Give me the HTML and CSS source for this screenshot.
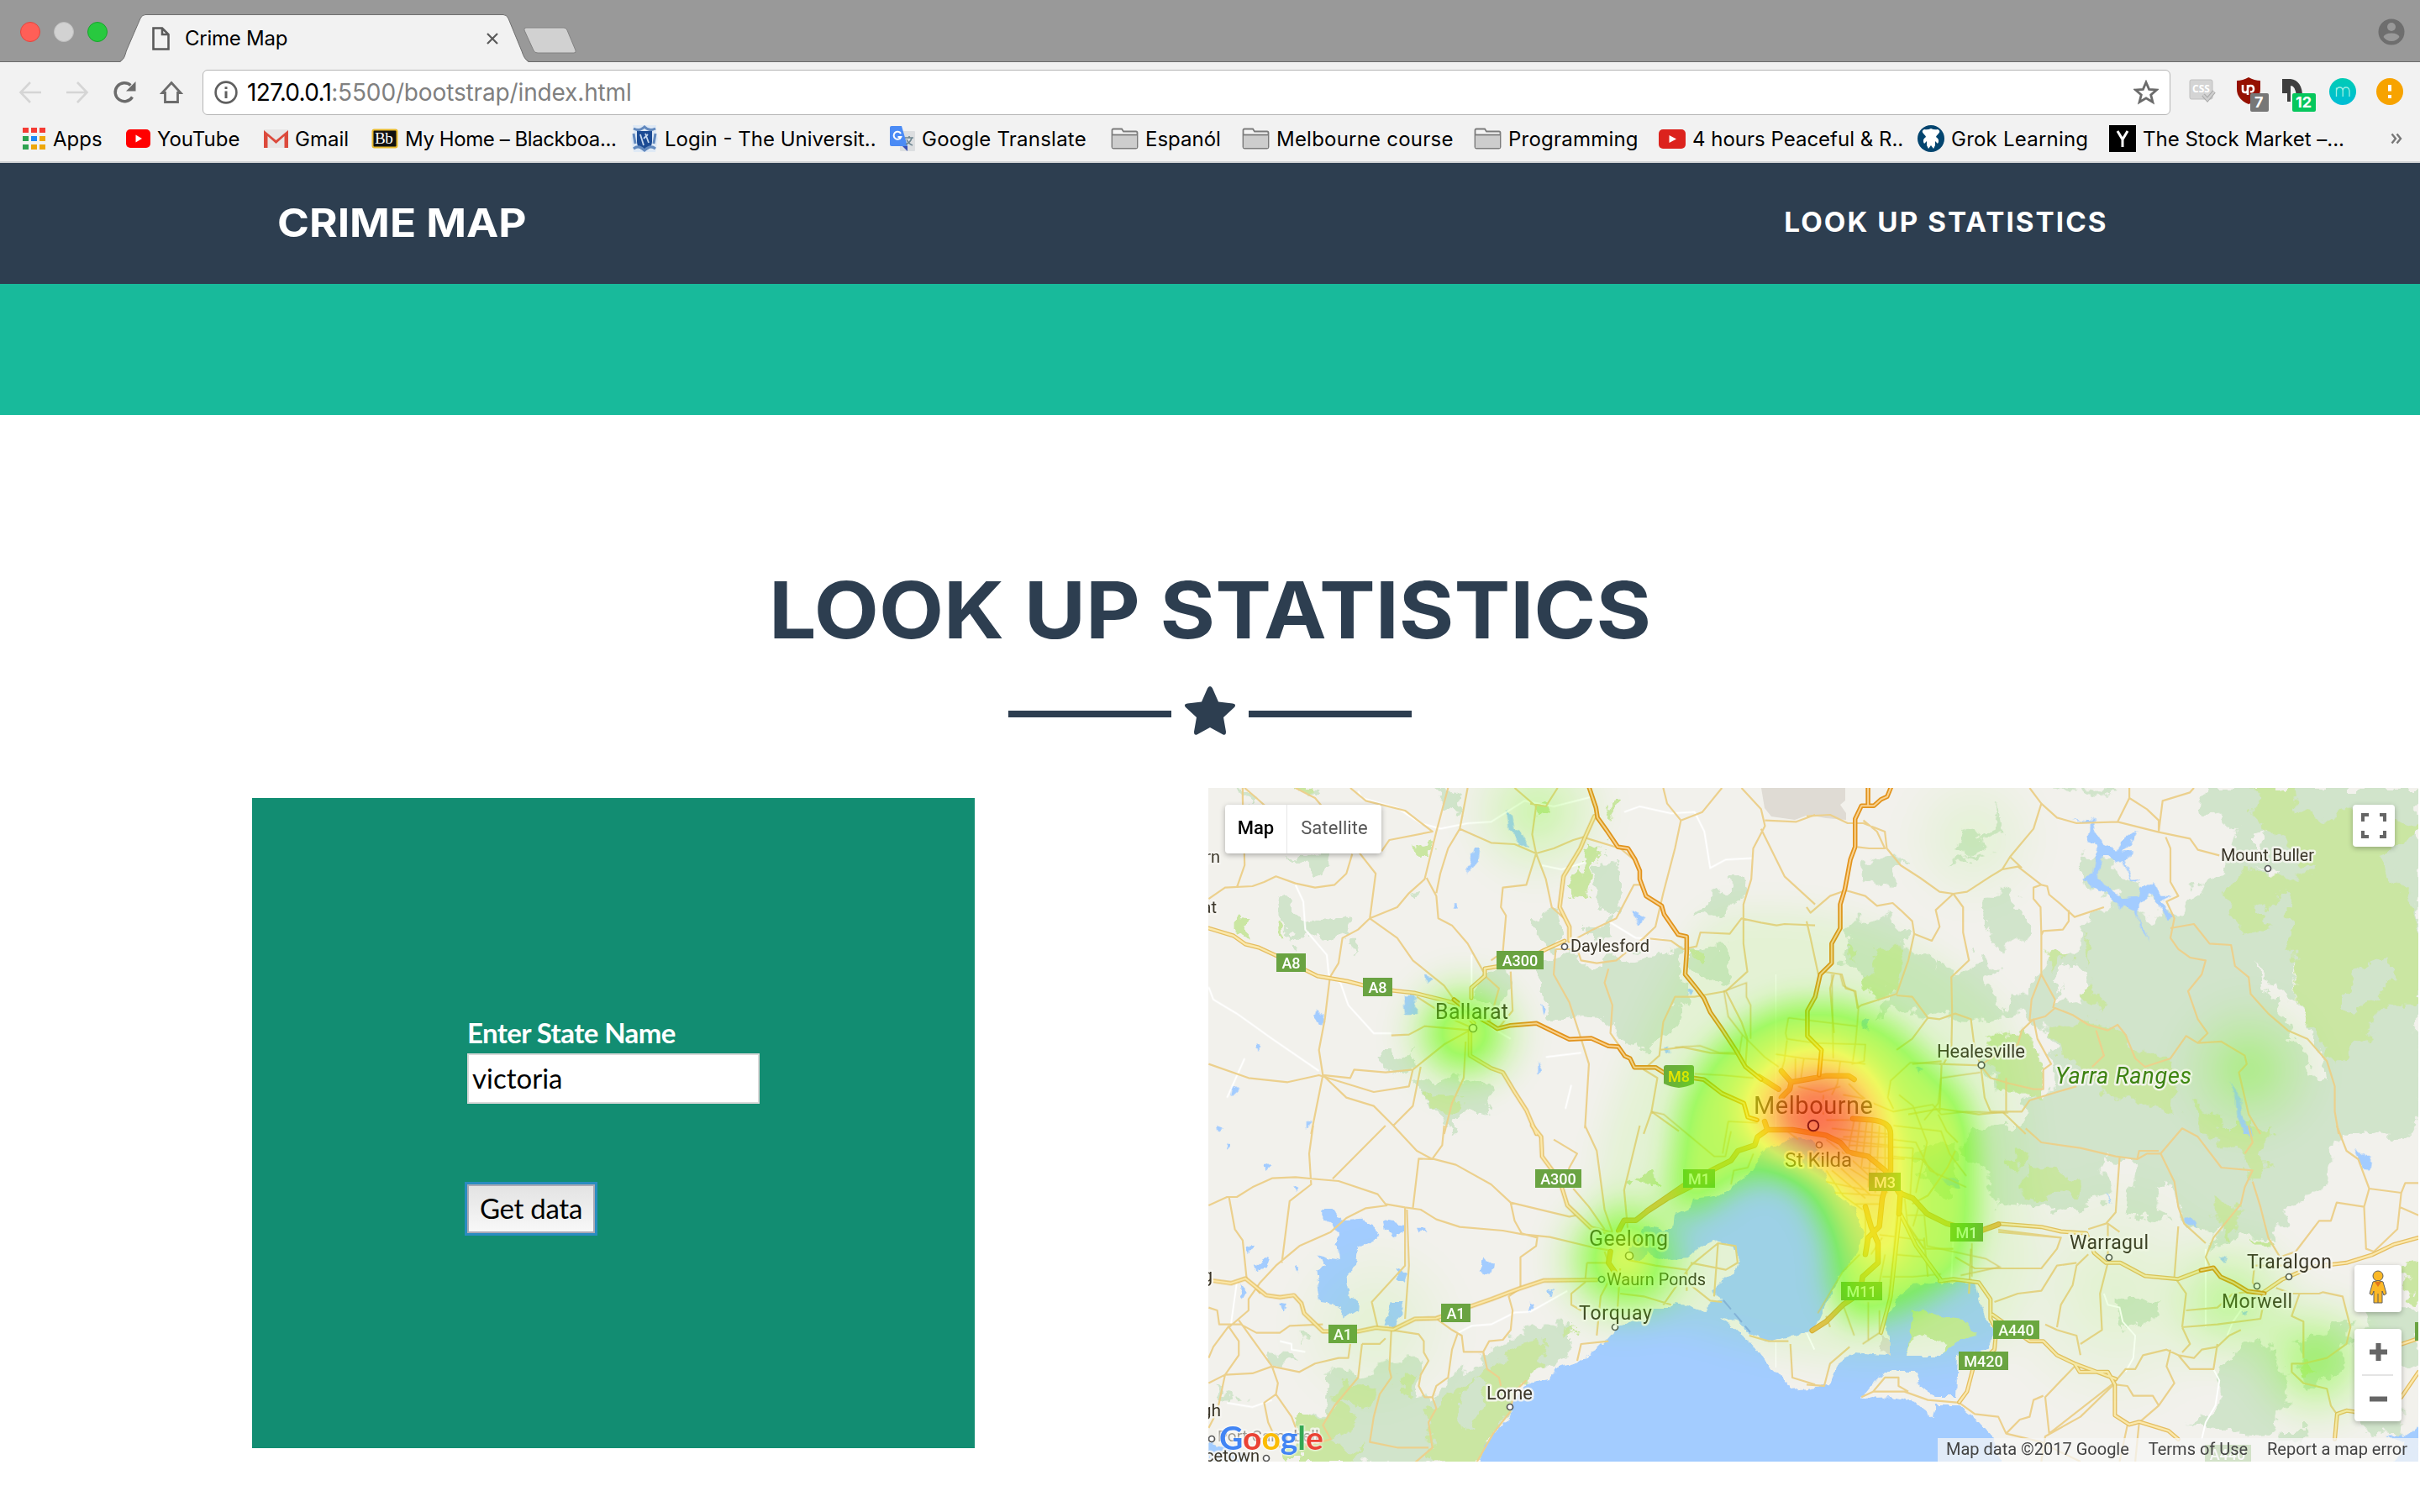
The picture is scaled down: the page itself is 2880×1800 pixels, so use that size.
FILE: index.html
```html
<!DOCTYPE html>
<html lang="en">
<head>
<meta charset="utf-8">
<title>Crime Map</title>
<link rel="stylesheet" href="styles.css">
</head>
<body>
<header class="browser">
  <div class="tabstrip">
    <div class="lights"><i class="light light-red"></i><i class="light light-gray"></i><i class="light light-green"></i></div>
    <div class="tab">
      <svg class="tab-shape" viewBox="0 0 486 57"><path d="M0 57C6 52 5 50 8 42L24 5Q26 0.5 30 0.5H456Q460 .5 462 5L478 44Q481 54 486 57Z" fill="#f2f2f2"/><path d="M0 56C6 52 5 50 8 42L24 5Q26 .5 30 .5H456Q460 .5 462 5L478 44Q481 54 486 56" fill="none" stroke="#6f6f6f"/></svg>
      <svg class="tab-file" viewBox="0 0 21 28"><path d="M1.5 1.5H12L19.500 9V26.500H1.500ZM12 1.500V9H19.500" fill="none" stroke="#5a5a5a" stroke-width="2.600"/></svg>
      <span class="tab-title">Crime Map</span>
      <svg class="tab-close" viewBox="0 0 14 14"><path d="M1 1L13 13M13 1L1 13" stroke="#5a5a5a" stroke-width="2.200"/></svg>
    </div>
    <svg class="newtab" viewBox="0 0 66 34"><path d="M4 1H49Q52 1 53 4L63 28Q64 31 61 31H18Q14 31 13 28L2 4Q1 1 4 1Z" fill="#d1d1d1" stroke="#828282"/></svg>
    <svg class="person" viewBox="0 0 32 32"><circle cx="16" cy="16" r="15.500" fill="#6e6e6e"/><circle cx="16" cy="10" r="5" fill="#999"/><path d="M6.500 22Q8 17.500 16 17.500T25.500 22Q22 27 16 27T6.500 22Z" fill="#999"/></svg>
  </div>
  <div class="toolbar">
    <div class="navbtns">
      <svg viewBox="0 0 28 28"><path d="M14 2L2.500 14L14 26M3 14H27" fill="none" stroke="#d5d5d5" stroke-width="2.600"/></svg>
      <svg viewBox="0 0 28 28"><path d="M14 2L25.500 14L14 26M25 14H1" fill="none" stroke="#d5d5d5" stroke-width="2.600"/></svg>
      <svg viewBox="0 0 28 28"><path d="M23.500 19.500A11 11 0 1 1 21.500 5.500" fill="none" stroke="#6b6b6b" stroke-width="3.400"/><path d="M27.500 1V12.500H16Z" fill="#6b6b6b"/></svg>
      <svg viewBox="0 0 28 28"><path d="M14 2.500L25 14.500H21.500V25.500H6.500V14.500H3Z" fill="none" stroke="#6b6b6b" stroke-width="2.800"/></svg>
    </div>
    <div class="omnibox">
      <svg class="info" viewBox="0 0 28 28"><circle cx="14" cy="14" r="12.400" fill="none" stroke="#5f5f5f" stroke-width="2.600"/><path d="M14 12.500V21M14 7.200V10" stroke="#5f5f5f" stroke-width="3"/></svg>
      <span class="url"><b>127.0.0.1</b>:5500/bootstrap/index.html</span>
      <svg class="star" viewBox="0 0 30 30"><path d="M15 3L18.600 11.300L27.500 12L20.700 17.900L22.900 26.500L15 21.800L7.100 26.500L9.300 17.900L2.500 12L11.400 11.300Z" fill="none" stroke="#6b6b6b" stroke-width="2.800"/></svg>
    </div>
    <div class="exts">
      <svg viewBox="0 0 42 42"><rect x="2" y="6" width="27" height="23" rx="2" fill="#d4d4d4" stroke="#c0c0c0"/><text x="5" y="21" class="css-word">CSS</text><path d="M18 24L23 29.500L31 20" fill="none" stroke="#a9a9a9" stroke-width="4.500"/><path d="M18 24L23 29.500L31 20" fill="none" stroke="#cfcfcf" stroke-width="2.500"/></svg>
      <svg viewBox="0 0 42 42"><path d="M2 7Q9 7 16 3Q23 7 30 7V17Q30 29 16 35Q2 29 2 17Z" fill="#951000"/><path d="M9 12V18Q9 21 12 21T15 18V12M15 24V16Q15 13 18.500 13T22 17T18 20" fill="none" stroke="#fff" stroke-width="2.600"/><rect x="18" y="22" width="22" height="22" rx="2" fill="#777"/><text x="23" y="39" class="badge-num">7</text></svg>
      <svg viewBox="0 0 42 42"><path d="M0 5H10Q24 7 24 26H17Q16 13 10 13V32H6V22H0Z" fill="#3f3f3f"/><rect x="12" y="22" width="28" height="22" rx="2" fill="#06c75d"/><text x="16" y="39" class="badge-num">12</text></svg>
      <svg viewBox="0 0 42 42"><defs><linearGradient id="mg" x2="0" y2="1"><stop stop-color="#00ccb4"/><stop offset="1" stop-color="#00bcd6"/></linearGradient></defs><circle cx="16" cy="20" r="16" fill="url(#mg)"/><path d="M8.500 26V15.500M8.500 19Q9 15 12.500 15T16.200 19V26M16.200 19Q16.500 15 20 15T24 19V26" fill="none" stroke="#9defe4" stroke-width="1.300"/></svg>
      <svg viewBox="0 0 42 42"><circle cx="16" cy="20" r="16" fill="#f7a300"/><path d="M16 12V19.500M16 24V28" stroke="#fff" stroke-width="4"/></svg>
    </div>
  </div>
  <nav class="bookmarks">
    <a class="bm"><svg viewBox="0 0 28 26" width="28" height="26"><path d="M0 0H7V6H0ZM10 0H17V6H10ZM20 0H27V6H20Z" fill="#f53b34"/><path d="M0 10H7V16H0ZM0 20H7V26H0Z" fill="#2da250"/><path d="M10 10H17V16H10Z" fill="#1e88f5"/><path d="M20 10H27V16H20ZM10 20H17V26H10ZM20 20H27V26H20Z" fill="#eea70b"/></svg>Apps</a>
    <a class="bm"><svg viewBox="0 0 29 22" width="29" height="22"><rect width="29" height="22" rx="5" fill="#f00"/><path d="M11.500 6.500L19 11L11.500 15.500Z" fill="#fff"/></svg>YouTube</a>
    <a class="bm"><svg viewBox="0 0 29 22" width="29" height="22"><path d="M0 0H29V22H0Z" fill="#e8e6e6"/><path d="M0 22V1L14.500 13L29 1V22H24.500V8L14.500 17L4.500 8V22Z" fill="#dc4a3c"/></svg>Gmail</a>
    <a class="bm bm-tight"><svg viewBox="0 0 32 24" width="32" height="24"><rect x="1.500" y="1.500" width="29" height="21" rx="2" fill="#111" stroke="#e8b92b" stroke-width="2"/><text x="4" y="18" class="bb">Bb</text></svg>My Home – Blackboa...</a>
    <a class="bm"><svg viewBox="0 0 32 32" width="32" height="32"><path d="M2 0H30V9L32 16L29 32H3L0 16L3 9Z" fill="#dfe9f5"/><path d="M7 7H25V20Q25 27 16 31Q7 27 7 20Z" fill="#1c4b94"/><path d="M3 4Q10 8 16 2Q22 8 29 4M3 28Q9 23 16 30Q23 23 29 28M3 10L5 22M29 10L27 22" fill="none" stroke="#6289be" stroke-width="3"/><path d="M11 11L15 24M17 10L21 21M20 11L15 16" stroke="#c6d8ee" stroke-width="1.800"/></svg>Login - The Universit..</a>
    <a class="bm bm-wide"><svg viewBox="0 0 30 30" width="30" height="30"><rect x="12" y="6" width="18" height="24" rx="1" fill="#dcdee0"/><path d="M15 24L21 30V24Z" fill="#3a50b5"/><path d="M2 0H14L21 24H2Q0 24 0 22V2Q0 0 2 0Z" fill="#4b8bf5"/><path d="M13 9A4.500 4.500 0 1 0 13.300 13H9.500" fill="none" stroke="#fff" stroke-width="2"/><path d="M18 14H28M23 12V14M26 14Q25 19 19 22M20 16Q22 21 27 23" stroke="#6d8590" stroke-width="1.600" fill="none"/></svg>Google Translate</a>
    <a class="bm"><svg viewBox="0 0 33 26" width="33" height="26"><path d="M1.500 5V23Q1.500 24.500 3 24.500H30Q31.500 24.500 31.500 23V6Q31.500 4.500 30 4.500H15L13 1.500H3Q1.500 1.500 1.500 3Z" fill="#f5f5f5" stroke="#7b7b7b" stroke-width="1.800"/><path d="M2 8H31V24H2Z" fill="#cdcdcd"/><path d="M2 8.500H31" stroke="#7b7b7b" stroke-width="1.800"/></svg>Espanól</a>
    <a class="bm bm-wide"><svg viewBox="0 0 33 26" width="33" height="26"><path d="M1.500 5V23Q1.500 24.500 3 24.500H30Q31.500 24.500 31.500 23V6Q31.500 4.500 30 4.500H15L13 1.500H3Q1.500 1.500 1.500 3Z" fill="#f5f5f5" stroke="#7b7b7b" stroke-width="1.800"/><path d="M2 8H31V24H2Z" fill="#cdcdcd"/><path d="M2 8.500H31" stroke="#7b7b7b" stroke-width="1.800"/></svg>Melbourne course</a>
    <a class="bm bm-wide"><svg viewBox="0 0 33 26" width="33" height="26"><path d="M1.500 5V23Q1.500 24.500 3 24.500H30Q31.500 24.500 31.500 23V6Q31.500 4.500 30 4.500H15L13 1.500H3Q1.500 1.500 1.500 3Z" fill="#f5f5f5" stroke="#7b7b7b" stroke-width="1.800"/><path d="M2 8H31V24H2Z" fill="#cdcdcd"/><path d="M2 8.500H31" stroke="#7b7b7b" stroke-width="1.800"/></svg>Programming</a>
    <a class="bm"><svg viewBox="0 0 32 23" width="32" height="23"><rect width="32" height="23" rx="5" fill="#dc231d"/><path d="M12.500 7L21 11.500L12.500 16Z" fill="#fff"/></svg>4 hours Peaceful &amp; R..</a>
    <a class="bm bm-wide"><svg viewBox="0 0 32 32" width="32" height="32"><circle cx="16" cy="16" r="16" fill="#04456f"/><path d="M8 5Q12 6 16 4Q20 6 24 5Q28 7 25 10Q22 13 22 14Q27 17 24 22L21 19V24L19 28L16 24L13 28L11 24V19L8 22Q5 17 10 14Q10 13 7 10Q4 7 8 5Z" fill="#fff"/></svg>Grok Learning</a>
    <a class="bm"><svg viewBox="0 0 32 32" width="32" height="32"><rect width="32" height="32"/><path d="M10 7L16 17L22 7M16 17V26" fill="none" stroke="#fff" stroke-width="3"/></svg>The Stock Market –...</a>
    <a class="bm"><svg viewBox="0 0 14 14" width="14" height="14"><path d="M1.500 1.500L6 7L1.500 12.500M7.500 1.500L12 7L7.500 12.500" fill="none" stroke="#777" stroke-width="2.400"/></svg></a>
  </nav>
</header>

<nav class="site-nav">
  <a class="brand">CRIME MAP</a>
  <a class="nav-link">LOOK UP STATISTICS</a>
</nav>
<div class="hero"></div>

<section class="stats">
  <h2 class="heading">LOOK UP STATISTICS</h2>
  <div class="divider">
    <span class="rule"></span>
    <svg viewBox="0 0 62 58"><path d="M31 0Q33 0 34 2.500L41 18.500L58 20.500Q63 21.500 60 25L47 37L50 54Q50 59 46.500 57.500L31 49L15.500 57.500Q12 59 12 54L15 37L2 25Q-1 21.500 4 20.500L21 18.500L28 2.500Q29 0 31 0Z" fill="#2d3e50"/></svg>
    <span class="rule"></span>
  </div>
  <div class="row">
    <form class="panel">
      <label class="label" for="state">Enter State Name</label>
      <input class="field" id="state" type="text" value="victoria">
      <button class="submit" type="button">Get data</button>
    </form>
    <div class="map">
      <svg class="map-canvas" viewBox="0 0 1440 802">
        <defs>
          <filter id="rough" x="0" y="0" width="1440" height="802" filterUnits="userSpaceOnUse">
            <feTurbulence type="fractalNoise" baseFrequency=".045" numOctaves="4" seed="4" result="n"/>
            <feDisplacementMap in="SourceGraphic" in2="n" scale="34" xChannelSelector="R" yChannelSelector="G"/>
          </filter>
          <filter id="shore" x="0" y="0" width="1440" height="802" filterUnits="userSpaceOnUse">
            <feTurbulence type="fractalNoise" baseFrequency=".08" numOctaves="3" seed="9" result="n"/>
            <feDisplacementMap in="SourceGraphic" in2="n" scale="9" xChannelSelector="R" yChannelSelector="G"/>
          </filter>
          <filter id="heat" x="-60" y="-60" width="1560" height="920" filterUnits="userSpaceOnUse" color-interpolation-filters="sRGB">
            <feGaussianBlur stdDeviation="19"/>
            <feColorMatrix values="0 0 0 1 0  0 0 0 1 0  0 0 0 1 0  0 0 0 1 0"/>
            <feComponentTransfer>
              <feFuncR type="table" tableValues=".4 .4 .4 .4 .66 .92 1 1 1 1 1"/>
              <feFuncG type="table" tableValues="1 1 1 1 1 1 .84 .62 .38 .2 .12"/>
              <feFuncB type="table" tableValues="0 0 0 0 0 0 0 0 0 0 0"/>
              <feFuncA type="table" tableValues="0 .17 .38 .58 .6 .6 .6 .6 .63 .66 .66"/>
            </feComponentTransfer>
          </filter>
          <radialGradient id="spot"><stop stop-color="#000" stop-opacity="1"/><stop offset=".5" stop-color="#000" stop-opacity=".45"/><stop offset="1" stop-color="#000" stop-opacity="0"/></radialGradient>
          <clipPath id="frame"><path d="M0 0H1440V802H0Z"/></clipPath>
          <g id="motorways">
            <g transform="translate(-8 -8) scale(.4656 .3333)">
              <path d="M990 20L1008 95L1012 130L1035 175L1064 235L1090 240L1108 280L1120 320V350L1136 410L1176 445L1182 475L1218 548L1240 555V610L1236 690L1265 740L1284 775L1300 825L1330 885L1365 960L1390 1020L1430 1065"/>
              <path d="M645 780L690 830L735 865L756 884L790 872L856 865L900 895L940 922L996 918L1040 946L1065 948L1082 982L1095 990L1106 1022H1160L1186 1045L1284 1066L1330 1115L1386 1150L1396 1200L1420 1210"/>
            </g>
            <g transform="translate(712 -8) scale(.4656 .3333)">
              <path d="M157 20V85M215 24L206 55L190 65L172 88H140L124 135V235L112 280L98 385L86 440V525L64 580V650L35 690L22 770L2 820V910L38 960L32 1050"/>
            </g>
            <g transform="translate(712 402) scale(.4656 .3333)"><path d="M1008 517L1040 508L1058 540L1090 560L1128 592L1170 600"/></g>
          </g>
          <g id="aroads">
            <path d="M0 167L30 176L44 186L60 190L88 203L130 224L165 230L200 239L245 244L293 256L316 280M313 250V238L329 224V215L372 208L400 193L424 182"/>
            <g transform="translate(-8 -8) scale(.4656 .3333)">
              <path d="M940 570V520L915 450L925 340L968 240L980 200L1004 125"/>
              <path d="M686 890V980L740 1025L770 1040L800 1110L830 1175L856 1260"/>
            </g>
            <g transform="translate(-8 402) scale(.4656 .3333)">
              <path d="M845 0L868 40L870 110L915 195L935 285L995 365L1045 385M18 552L75 563L112 546L165 606L200 613L236 606L255 635L262 670L310 735L400 735L445 722L490 728L545 690L600 688L740 620L812 582L875 553L1010 551"/>
            </g>
            <g transform="translate(712 402) scale(.4656 .3333)">
              <path d="M490 350L600 362L650 378L715 385L735 455L765 490H802L865 537L950 548L1008 517M1165 598L1215 550L1290 505L1380 490L1445 462L1500 425L1564 400M340 555L375 548L440 560L470 620V690L485 730L480 800L425 870L410 950L390 988M475 675L520 720L570 770L605 770L640 820L685 850L698 880H770L788 925V1035L825 1068L850 1058L925 1090L950 1120M1350 1120L1356 1030L1380 1018L1400 1022M1564 880L1520 970M790 905L685 850"/>
              <path d="M240 315L280 430L345 555M238 315L215 610L190 740M1500 790L1564 760"/>
            </g>
          </g>
          <g id="urban">
            <g transform="translate(522 222) scale(.3333)">
              <path d="M480 345L515 385L600 370L640 362H720L740 375M400 365L470 410M515 385L510 410L480 440M735 515L800 520Q870 525 870 570V700L840 800L830 900L790 940L780 1000M780 830L800 900L825 960V1030L770 1080L760 1140L700 1180L640 1240L590 1272M420 525L430 555H520L640 575L690 600L720 635L790 650L850 700L900 780L950 800L1000 855L1070 890L1180 920L1255 893M430 555L395 580L385 610L325 630L300 665L240 695L130 755L0 845"/>
              <path d="M905 780L900 855"/>
            </g>
            <g transform="translate(-8 402) scale(.4656 .3333)"><path d="M1250 218L1190 260L1140 305L1110 338H1080L1066 375M1045 450L1040 490L1055 520"/></g>
          </g>
        </defs>
        <g clip-path="url(#frame)">
          <rect width="1440" height="802" fill="#f2f1ec"/>
          <g filter="url(#rough)" class="forest">
            <g transform="translate(-8 -8) scale(.4656 .3333)">
              <path d="M190 400L235 430L250 490L300 510L370 480L385 530L310 560L275 540L240 590L215 540L190 500ZM600 40L660 30L655 110L620 90ZM230 265L340 260L330 320L290 330ZM80 40L130 50L120 90ZM240 35L300 40L290 70ZM1035 260L1070 290L1075 420L1040 500L1010 440L1000 340ZM850 490L900 470L930 540L890 600L850 560ZM990 520L1050 500L1060 560L990 590ZM860 650L930 610L1000 660L1080 630L1220 610L1235 720L1215 870L1140 960L1060 910L1030 850L950 840L900 840L850 740ZM1300 420L1360 350L1400 380L1370 460L1270 470ZM1250 600L1340 590L1350 700L1310 720L1250 660ZM720 680L780 660L790 740L760 810L710 780ZM450 990L540 950L545 1020L490 1060ZM550 1070L640 1060L740 1080L740 1150L640 1240L580 1170ZM365 560L390 560L385 620ZM530 390L565 380L550 420Z"/>
            </g>
            <g transform="translate(712 -8) scale(.4656 .3333)">
              <path d="M130 280L250 270L220 390L150 370ZM490 60L510 190L430 240L420 300L350 290L470 260L380 240L400 170L460 210L490 150ZM470 380L540 440L570 560L500 590L460 560ZM120 500L190 490L240 520L250 580L340 680L330 640L380 700L440 620L480 680L450 750L560 760L610 650L690 590L710 510L790 430L840 460L880 480L940 480L1000 380L1060 300L1100 180L1010 100L1020 20H1568V1260H540L560 1140L640 1080L620 900L560 840L430 850L350 840L220 820L180 840L220 760L150 700L90 650L110 560ZM700 270L760 250L820 340L900 420L830 430L740 400L700 360ZM620 20L800 30L780 60ZM450 960L560 920L600 1000L600 1120L490 1100L460 1040Z"/>
            </g>
            <g transform="translate(-8 402) scale(.4656 .3333)">
              <path d="M180 800L230 810L240 850L190 860ZM250 740L290 760L250 780ZM330 870L400 880L480 850L560 820L570 870L540 960L580 980L620 920L720 850L780 740L860 710L960 720L960 780L900 850L830 900L800 1000L740 1100L700 1210H400L260 1160L250 1060L320 1000ZM30 930L60 940L70 990ZM80 960L110 980L90 1000Z"/>
            </g>
            <g transform="translate(712 402) scale(.4656 .3333)">
              <path d="M410 20L520 0H1360L1330 200L1230 300L1190 410L1120 400L1040 430L1050 380L960 360L940 200L880 220L920 340L820 320L840 130L760 110L780 240L660 310L480 280L460 170L400 120ZM790 620L900 610L880 700L800 720ZM1060 830L1170 760L1220 860L1240 1000L1170 1110L1070 1100L980 1060L1060 1000ZM1250 780L1390 700L1370 860L1290 950L1240 880ZM1420 640H1568V860L1430 860ZM1400 1020H1520V1100L1420 1090ZM1210 1080H1280V1120H1200ZM280 80L380 60L400 240L350 250L280 170Z"/>
            </g>
          </g>
          <g filter="url(#rough)" class="clearing">
            <path d="M1248 205L1262 245L1290 290L1310 335L1330 350L1328 320L1310 285L1300 230L1290 215L1300 262L1275 250ZM1245 55L1262 48L1255 70L1245 75ZM1040 330L1055 300L1058 320L1050 345ZM1020 210L1050 220L1035 260L1010 250ZM935 215L945 270L960 250L955 230ZM1245 94L1275 102L1272 112ZM870 300L880 290L885 325L870 315Z"/>
          </g>
          <g filter="url(#rough)" class="park">
            <g transform="translate(-8 -8) scale(.4656 .3333)"><path d="M840 70L880 70L900 140L850 130ZM980 220L1030 240L1000 310L985 420L930 380L970 330ZM85 485L125 490L130 560L85 550ZM180 490L215 570L185 550ZM540 230L590 210L580 270ZM1040 70L1060 80L1050 140ZM570 1130L660 1120L660 1190L590 1180ZM1240 600L1290 620L1280 660ZM230 15H270V45L240 40Z"/></g>
            <g transform="translate(712 -8) scale(.4656 .3333)"><path d="M1140 20H1240L1250 90L1320 150L1380 100L1568 150V180L1470 290L1560 460L1568 800L1480 800L1430 900L1350 1020L1300 880L1270 850L1240 640L1230 520L1180 500L1110 540L1070 430L1120 320L1230 350L1290 330L1200 200L1150 120ZM185 580L250 590L240 700L210 780L150 750ZM95 600L130 590L120 630ZM615 600L670 610L630 690ZM700 740L740 720L750 840L720 820ZM620 900L700 850L790 870L860 980L930 1010L950 1110L930 1190L860 1150L790 1140L740 1080L660 1000ZM460 920L560 890L600 990L600 1120L500 1120ZM990 1140L1080 1250H1010ZM705 540L730 610L720 650Z"/></g>
            <g transform="translate(-8 402) scale(.4656 .3333)"><path d="M370 920L440 930L420 1000L360 990L400 1040L360 1100L330 1140L410 1160L380 1200H210L260 1100L240 1050L300 1030L340 980ZM500 880L540 900L530 980L500 960ZM760 840L850 750L885 800L880 860L840 900L790 1000L740 1100L690 1210H590L580 1020L640 960L700 900ZM930 720L970 740L940 750ZM1110 180L1160 150L1160 215L1110 200Z"/></g>
            <g transform="translate(712 402) scale(.4656 .3333)"><path d="M565 130L690 200L690 250L630 240L600 280L560 260ZM510 110L570 100L540 150ZM1020 0H1180L1180 200L1140 190L1100 90L1050 60ZM1040 240L1110 290L1080 410L1050 370ZM1250 830L1310 880L1250 900ZM1520 480L1568 490V620L1530 600ZM1130 410L1180 420L1170 450Z"/></g>
          </g>
          <g filter="url(#rough)" class="forest"><path d="M1370 215L1410 200L1400 240L1360 275L1350 260ZM1245 145L1290 130L1285 170L1265 160ZM1405 70L1440 65V120L1405 90ZM290 740L320 700L335 720L310 765Z"/></g>
          <path d="M658 0H758V15L752 20L759 30V38L735 36L714 32L698 38L670 34L662 24Z" fill="#dfdbd4"/>
          <g filter="url(#shore)" class="water">
            <path d="M318 810L339 769L362 744L360 735L381 709L406 704L416 690L434 685L462 669L476 655L490 639L523 632L527 620L551 620L558 612L592 622L597 612L613 609L599 599L616 582L625 579L631 562L625 545L602 539L588 545L572 559L541 562L523 552L519 560L509 565L499 545L513 535L518 519L537 525L553 525L555 509L572 502L576 489L611 485L630 469L648 455L662 432L682 422L702 415L722 419L732 455L745 482L769 499L779 532L772 555L752 582L735 612L722 642L702 652L672 659L649 652L629 635L609 630L644 659L662 682L681 699L693 717L714 715L740 710L747 689L768 672L805 675L812 669L805 635L819 609L838 592L870 589L912 589L917 612L935 649L926 669L891 675L889 725L866 725L847 712L842 695L805 695L789 712L777 727L814 725L842 732L863 750L866 735L894 735L917 755L935 775L945 810Z"/>
            <g transform="translate(-8 402) scale(.4656 .3333)"><path d="M310 300L340 300L360 340L410 335L440 360L452 400L400 435L395 500L370 530L375 610L402 620L400 660L365 690L350 640L305 630L295 520L320 500L295 460L350 480L345 430L355 380L310 340ZM485 630H510V680L490 720L465 710ZM465 340L520 350L515 380L490 400L470 370ZM720 470L745 490L740 530L710 520ZM135 500L175 470L165 510L140 520ZM110 430L130 425L120 460ZM235 215L248 225L240 240ZM165 130L180 140L165 160ZM500 510L522 530L515 560L500 550ZM550 365H572V380L555 382ZM198 635L215 640L205 660ZM885 590L900 580L895 610ZM835 630L848 640L838 670ZM100 560L115 590L105 615ZM65 60L75 70L68 90ZM18 1130L120 1180L110 1210H18ZM240 500L252 510L245 530Z"/></g>
            <g transform="translate(-8 -8) scale(.4656 .3333)"><path d="M780 105L795 120L800 170L820 190L838 235L810 220L785 170ZM695 240H710L705 290L680 330ZM515 765L548 770V835H520ZM295 815L315 840L305 870L290 840ZM570 695L592 700L575 720ZM80 1090L98 1100L75 1130ZM640 430H650V455H640ZM1100 460L1115 470L1130 490L1118 520ZM860 1000L872 1030L860 1050ZM140 940L155 945L145 960ZM870 800L882 815L875 830ZM1185 950H1196V975L1185 970ZM1240 740L1255 750L1245 765ZM270 1210L280 1220L270 1245ZM40 1230L60 1240L45 1255Z"/></g>
            <g transform="translate(712 -8) scale(.4656 .3333)"><path d="M680 138L725 142L735 120L740 180L760 225L790 245L805 215L845 180L825 230L805 250L838 250L825 275L815 290L835 350L850 345L835 360L810 290L770 270L755 270L745 340L770 380L805 415L845 410L850 390L885 360L905 410L935 410L905 430L920 460L940 480L925 490L895 440L880 395L850 440L848 490L875 570L855 530L840 460L810 440L800 465V440L765 400L730 380L705 350L730 330L735 290L742 230L715 220L725 170V150ZM145 850H160L158 890L145 885ZM275 1020L295 1030L290 1045ZM1080 1070L1105 1120L1115 1190L1135 1260H1115L1100 1190L1095 1120Z"/></g>
            <g transform="translate(712 402) scale(.4656 .3333)"><path d="M1120 0H1135L1140 45L1128 30ZM1400 80L1430 110L1445 110L1440 165L1420 150ZM965 330L985 320L1000 365L970 350ZM760 240L775 260L778 280ZM1055 465L1075 475L1070 485ZM345 190L385 190L395 220L360 215ZM1568 1070V1210H1500L1530 1130L1480 1110L1540 1105ZM1110 660L1128 662L1120 678Z"/></g>
          </g>
          <g filter="url(#shore)"><path d="M838 619L870 629L898 632L914 650L894 659L870 675L833 675Z" fill="#cae6a2"/><path d="M852 650L866 658L880 662L872 676L833 676L836 658Z" fill="#f2f1ec"/><path d="M800 650L812 660L812 676L800 670Z" fill="#dfdbd4"/></g>

          <g class="tracks">
            <g transform="translate(-8 -8) scale(.4656 .3333)"><path d="M240 370L260 430L265 530L320 620L325 690L355 720L375 800L440 900H485M18 735L30 780L90 830L180 920L300 1035M400 35L410 60L500 95L560 150L610 170L680 150L740 145L825 70L900 90L1000 55M1080 110L1120 90L1200 115L1260 110L1285 180L1300 310L1340 280L1410 275M690 620V740M870 300L920 315L980 290M1040 500L1110 560L1180 565M110 990L65 1130M880 985L970 970M945 1085L930 1170M740 880L790 920"/></g>
            <g transform="translate(-8 402) scale(.4656 .3333)"><path d="M935 590L840 665L800 668L740 710L690 715L655 740M90 560L75 710M200 770L230 780V800L265 808M65 990L130 1005L180 980"/></g>
            <g transform="translate(712 402) scale(.4656 .3333)"><path d="M760 600L770 640L800 650L808 700L840 750L835 830L815 880M1040 870L1055 910L1045 1000L1020 1060L1010 1120M1020 440V720M1120 640L1090 700L1075 750M0 740L20 800M375 400L370 550"/></g>
            <path class="seam" d="M675.500 222V410M675.500 660V690"/>
          </g>
          <g class="roads">
            <g transform="translate(-8 -8) scale(.4656 .3333)">
              <path d="M18 420L60 380L130 375L160 360L190 340L240 365L290 380L340 370L370 330L385 260M105 24V60L110 300L90 380M110 24L140 60L180 110M240 24L290 60L320 110M380 24L420 70L520 105L590 180L480 210L460 250M400 250L445 330L430 490L400 530L360 560L350 650L328 700L315 850L300 960L310 1050L280 1260M430 490L500 450L530 400L570 350L600 180L630 24M430 490L500 560L540 640L620 730L645 780M575 345L600 410L605 490L640 515L680 580L720 680M680 24L660 170L630 240L610 330L600 400M660 170L740 220L800 225L855 258L900 240L950 210L975 200L1070 240L1105 280M800 24L855 90L845 190L855 258L830 370L770 380L765 450L778 480L770 610L740 640M910 24L880 90L840 80M855 258L880 350L895 450L935 500M940 575L1000 530L1060 490L1105 370L1120 370M905 600L900 690L940 790L970 920L990 1010L980 1240M905 600L960 600L970 640L1010 650L1060 640L1130 560L1160 520L1180 400L1210 240L1225 140L1190 80L1180 24M1225 140L1280 110L1330 24M1380 24L1430 100L1440 160L1410 240L1405 350L1385 440V580L1395 680L1340 750L1260 770L1210 770L1180 860L1170 980L1130 1030L1165 1060L1150 1180L1130 1260M1130 560L1200 570L1230 600L1265 590L1275 540L1350 545L1380 490L1430 505L1470 515L1490 510L1568 515M1430 170L1490 340L1568 440M1440 140L1520 145L1568 120M1340 750L1380 860L1395 920L1390 1020M1170 960L1230 950L1300 970L1370 975M1150 1180L1220 1250M790 680L795 820L760 880M550 770L640 850L690 880M485 908L530 905L570 875L690 890M685 890L620 940L540 1030L530 1090L440 1110L300 1050L220 1075L120 1060L18 1010M310 1050L380 1060L390 1030L470 1040L540 1030M310 1050L370 1130L440 1160L490 1230L540 1160L560 1020M675 930L670 1060L640 1150L620 1260M735 865L760 740L720 690M690 830L600 800M1040 670L1030 720L1050 800L1045 900L1070 950"/>
            </g>
            <g transform="translate(712 -8) scale(.4656 .3333)">
              <path d="M0 125L60 120L105 150H145L200 180L205 240L240 300L290 345L340 395L375 402L410 395L470 340L500 315L540 305L600 370L615 375L620 405L650 440L685 485L760 450M145 140L180 180L200 240L160 240L130 235M570 24L600 80L580 170L520 270L500 315M520 270L550 310M600 80L640 130L690 150L795 145L900 182L980 205L1000 245L1055 265M825 24V60L795 145M825 60L870 100L900 140V180L910 70L980 40L990 24M918 200L930 240V360L950 410L920 430L940 490L930 560L950 600L980 630L1020 640L1010 690L975 750L1000 850L1025 900L1000 935L1060 930L1120 980L1125 1010L1105 1040L1115 1100L1130 1190L1160 1260M930 525L990 510L1030 580L1085 585L1095 660L1130 700L1135 760L1180 830L1230 890L1280 920L1330 1000L1350 1090V1180L1360 1260M1000 935L970 910L930 990L865 1020L840 990L815 905L795 870L770 890L720 870L680 835L635 810L610 840L570 855L575 780L600 690V550L598 450L580 420L580 380L600 370M600 550L605 535L655 530L670 500V460M600 690L635 780L630 810M375 402L400 450L400 540L415 640L370 700L372 830L370 960L350 1010M375 402L330 460L340 520L320 570L275 545L270 500L240 460L220 435L180 445L150 410L100 390L60 410L10 470L0 450M275 545L260 640L230 760L140 800L130 810L125 750L100 740L90 690L40 680M230 765L270 770L310 845L340 850L380 830L420 850L430 960L445 1015L470 990L540 940L550 890L580 850L590 920L625 1010L605 1030V1100L580 1100L520 1080L470 1060L445 1015L340 1010M445 1015L455 1130L470 1180M470 1180H550L570 1140L640 1110L690 1090M500 1180L560 1260M510 1060V1180L440 1190L340 1170L260 1190M740 890L760 980L730 1020M310 845L270 920L230 960M270 1010L345 1000M345 1010L340 1180M0 500L10 560L30 690M70 690L60 740L70 900"/>
            </g>
            <g transform="translate(-8 402) scale(.4656 .3333)">
              <path d="M285 0L275 100L280 210L225 270L205 490M18 285L65 255H90L130 220L180 188L240 184L300 192L350 198L450 245L470 280L520 292L560 300L600 335L660 362L770 375L820 388L890 398L1000 435L1040 445M470 0L335 190M490 0L550 90L590 120L555 118L540 295M620 0L615 70L590 118L650 140L740 210L790 275L940 325L960 320M790 275L800 340L818 385L858 400L855 430L815 470V580L785 610L795 660L790 730L770 765L735 770L720 808H670L665 750L640 730L600 690M475 285L420 295L370 330L330 380L250 430L190 500L150 560L120 620L120 660L70 720L95 770V820L60 890L40 1020L18 1080M70 255L85 370L105 410L115 545L150 600M520 295V500L435 630L450 720M525 300L530 500L520 690M18 650L40 660L45 710L100 710L140 740H200L225 715L310 710M70 715L30 790L18 830M95 695L180 860L250 880L290 850L350 830H375L380 780M180 860L130 885L60 890L18 920M180 860L195 920L190 960L160 990L170 1060L200 1150M190 960L230 1040L260 1150M485 730L480 870L485 900L455 960L440 1040L430 1130L500 1150L580 1150M485 730L555 745L568 770V810L580 840L560 890L555 930L570 970H590L600 1010L580 1060L590 1150L540 1210M655 740L640 800L630 900L600 930L590 970M720 808L730 870L760 900L765 930M410 780L400 900L340 1000L310 1070L330 1120L260 1150M470 760L455 780L410 780M900 50L960 100L940 150L930 200M980 0L1010 90L1030 300L1050 380M1120 0L1080 230L1090 380M950 225L990 290L1030 370M1030 450L1050 530L1020 610L1010 750M985 490L980 560L945 600V640L970 660M1040 490H985M1070 510L1060 720M1070 600L1130 610L1200 640M1090 480L1160 500L1240 515L1240 590M1250 490L1340 515L1370 490L1365 430L1320 420L1250 500L1180 640M1320 420L1310 610M1250 570L1300 625L1330 630M790 1020L745 1100L700 1210M830 910L800 950L790 1010M960 840L970 780L1040 770M1400 750L1450 770H1500M1505 780L1510 900L1568 925"/>
            </g>
            <g transform="translate(712 402) scale(.4656 .3333)">
              <path d="M560 10L600 60L700 80L790 110L845 120L870 100H905L960 10L1000 40L1060 150L1140 160L1120 220L1110 280L1040 400L1020 470L1030 500M905 100L940 200L950 290L965 350L1020 420M845 120L850 90L900 90M800 115L790 310L765 350L720 370M1130 0L1140 60L1120 100M1140 200L1160 290L1180 400L1210 470L1250 450L1310 340H1340L1355 275L1425 290L1438 225L1410 120L1380 90L1355 0M1438 225L1520 240L1510 370L1450 450M1520 240L1530 205H1564M1515 290L1564 320M1425 290L1430 440L1450 450M950 360L940 540L970 600L960 720M380 470L430 510H600L640 440L650 400L490 380M650 400L490 372M690 490L640 500L600 590L540 600L480 630M720 460L690 500L680 570L650 640L640 720M800 380L770 350V490L750 600L755 730L700 780M640 730L610 710M640 730L690 750L700 820M960 720L1050 710L1160 690L1170 620L1140 560L1145 500L1230 500M970 660L1050 650L1090 600L1160 590M1200 580L1240 600H1310L1320 595L1370 610L1390 720L1380 780L1330 830L1270 850H1240V880L1270 920L1330 940L1340 1000L1355 1030M1260 600L1240 680L1270 700V830M1050 780L1040 870H980L950 820L920 800L860 820L840 870H815L785 920L620 1100L610 970L685 860M950 820L990 830L1010 800L1050 790L1080 750L1110 730M960 720L980 780L960 810M790 925L820 930L835 965H885L900 1000L850 1060L840 1200M885 965L900 1000L940 920L920 860L930 800M390 990L430 1030L490 1040L510 1100L545 1050L570 1040L580 980L605 965M510 1100L600 1130L640 1160L700 1200M785 925L700 1040L610 1110L600 1200M820 1070L800 1200M140 970L170 950H250L310 980L390 990M170 950L200 900H235V930L260 950M0 925L45 930L60 850L110 790M60 720L50 680M420 440L415 600M300 400L310 540M250 340L300 440H375M270 280L310 250L360 150L380 90"/>
            </g>
          </g>
          <g class="streets">
            <g transform="translate(522 222) scale(.3333)">
              <path d="M505 155L750 185L745 240L735 310M505 155L495 210L500 230L600 245L780 250L775 310L730 320M500 235L490 310L480 345M460 285L560 300L690 310L780 320M530 300V380M560 300L550 370M660 0L665 300M740 60L755 120L750 185M690 0L700 40L740 60M340 215L420 295L470 330M100 260L190 255L260 280H330L340 215L290 150L275 60L355 30V80L370 110V230M170 355L270 360L380 370M290 525L395 530M290 525L270 640M300 560L280 650H240L60 500L15 490M690 310L680 390L660 430M720 390L760 430L800 460M630 430V500M700 430L760 440L880 490L1020 465L1050 500L1140 490L1290 495M540 400L620 420L690 400M640 520H800M660 550L860 570M700 580H860M720 610L950 620M760 650L920 660M770 690L850 700M740 520L720 620M760 525L745 650M785 525L765 690M805 530L790 760M830 540L815 780M850 540V700M880 540L1050 560L1080 640L1140 720M880 590L960 600L1010 700L1140 760M880 650L980 660L1040 720M880 480L860 440L870 380L940 315L1050 320M1050 370L1120 360L1190 350M900 430L950 470L1000 600L960 780M950 620L940 790M640 700L700 790L770 840M660 700L780 800M690 690L800 790M720 690L830 760M640 740L780 770M670 780L840 790M740 820L840 820M780 850V1000M840 940L800 1000M900 780L880 1000L860 1180M920 800L930 890L990 980M930 860H990L1000 970L1210 1015L1260 1045L1120 1075M830 930L990 950M880 1000L1000 1010M840 1080H950L1050 1070M970 830L950 900M830 1200V1280L770 1320M700 1180L740 1290M790 1170V1310M850 1000L830 1100M610 1210L700 1060L760 1000M540 590L500 560M640 590L740 670L860 780M630 575L760 600L860 610M1010 1030L1060 1100L1160 1090M1160 960V1080M380 640L360 690L310 700L300 750M1050 370L1040 460L990 520M1040 500L1070 560L1110 600"/>
            </g>
          </g>
          <use href="#aroads" class="a-case"/><use href="#aroads" class="a-core"/>
          <use href="#urban" class="u-case"/><use href="#urban" class="u-core"/>
          <use href="#motorways" class="m-case"/><use href="#motorways" class="m-core"/>
          <path d="M613 610L645 648" stroke="#86acec" stroke-width="2" stroke-dasharray="14 6"/>

          <g class="dots">
            <circle cx="424" cy="189" r="3.500"/><circle cx="315" cy="286" r="4.500"/><circle cx="727" cy="425" r="3.500"/><circle cx="920" cy="330" r="3.800"/><circle cx="1261" cy="96" r="3.500"/><circle cx="501" cy="557" r="4.500"/><circle cx="468" cy="585" r="3.500"/><circle cx="484" cy="642" r="3.500"/><circle cx="359" cy="737" r="3.500"/><circle cx="1072" cy="559" r="3.500"/><circle cx="1286" cy="582" r="3.500"/><circle cx="1248" cy="593" r="3.500"/><circle cx="69" cy="798" r="3.500"/><circle cx="4" cy="775" r="3.500"/>
          </g>
          <g class="places">
            <text x="431" y="195" textLength="94" font-size="20">Daylesford</text>
            <text x="270" y="275" textLength="87" font-size="25">Ballarat</text>
            <text x="649" y="388" textLength="142" font-size="29">Melbourne</text>
            <text x="686" y="451" textLength="80" font-size="24">St Kilda</text>
            <text x="867" y="321" textLength="105" font-size="22">Healesville</text>
            <text x="1205" y="87" textLength="111" font-size="20">Mount Buller</text>
            <text x="453" y="545" textLength="94" font-size="25">Geelong</text>
            <text x="474" y="592" textLength="118" font-size="20">Waurn Ponds</text>
            <text x="441" y="633" textLength="87" font-size="23">Torquay</text>
            <text x="331" y="728" textLength="55" font-size="22">Lorne</text>
            <text x="1025" y="549" textLength="94" font-size="23">Warragul</text>
            <text x="1236" y="572" textLength="101" font-size="23">Traralgon</text>
            <text x="1206" y="619" textLength="84" font-size="23">Morwell</text>
            <text x="14" y="89" text-anchor="end" font-size="20">rn</text>
            <text x="10" y="149" text-anchor="end" font-size="20">at</text>
            <text x="5" y="588" text-anchor="end" font-size="22">g</text>
            <text x="15" y="748" text-anchor="end" font-size="21">gh</text>
            <text x="61" y="802" text-anchor="end" font-size="20">cetown</text>
            <text x="11" y="778" font-size="19" fill-opacity=".5">Port Campbell</text>
            <text x="1008" y="352" textLength="162" font-size="27" class="range">Yarra Ranges</text>
          </g>
          <g class="shields">
            <rect x="81" y="197" width="35" height="22"/><rect x="184" y="226" width="35" height="22"/><rect x="343" y="194" width="56" height="22"/><rect x="389" y="454" width="55" height="22"/><rect x="565" y="454" width="38" height="22"/><rect x="277" y="614" width="35" height="22"/><rect x="143" y="639" width="34" height="22"/><rect x="786" y="458" width="38" height="22"/><rect x="883" y="518" width="39" height="22"/><rect x="753" y="588" width="49" height="22"/><rect x="934" y="634" width="55" height="22"/><rect x="893" y="671" width="59" height="22"/><rect x="1436" y="636" width="10" height="22"/><rect x="1186" y="782" width="55" height="22"/>
            <path d="M545 330H575Q578 330 578 333V352Q570 356 560 357Q550 356 542 352V333Q542 330 545 330Z"/>
            <text x="98.500" y="215">A8</text><text x="201.500" y="244">A8</text><text x="371" y="212">A300</text><text x="416.500" y="472">A300</text><text x="584" y="472">M1</text><text x="294.500" y="632">A1</text><text x="160" y="657">A1</text><text x="805" y="476">M3</text><text x="902.500" y="536">M1</text><text x="777.500" y="606">M11</text><text x="961.500" y="652">A440</text><text x="922.500" y="689">M420</text><text x="560" y="350" class="m8">M8</text><text x="1213" y="800">A440</text>
          </g>
          <g filter="url(#heat)">
            <path d="M600 150Q800 120 950 270Q1010 500 950 660Q800 720 560 640Q440 620 470 420Q520 250 600 150Z" fill-opacity=".06"/>
            <path d="M690 256L760 256L815 282L855 320L898 362L914 420L916 520L900 580L830 622L765 640L742 600L738 540L716 492L690 468L655 462L625 474L592 500L558 508L548 480L556 425L560 385L574 350L600 310L640 278Z" fill-opacity=".33"/>
            <path d="M680 312L740 302L790 332L816 376L828 425L836 510L822 572L780 566L758 510L735 468L710 440L665 425L632 410L630 362Z" fill-opacity=".27"/>
            <path d="M695 345L750 340L790 380L806 440L800 490L765 480L740 445L715 425L675 415L670 375Z" fill-opacity=".32"/>
            <circle cx="724" cy="391" r="76" fill="url(#spot)"/>
            <circle cx="869" cy="413" r="34" fill="url(#spot)" fill-opacity=".2"/>
            <circle cx="304" cy="292" r="76" fill="url(#spot)" fill-opacity=".56"/>
            <circle cx="494" cy="562" r="88" fill="url(#spot)" fill-opacity=".56"/>
            <circle cx="392" cy="28" r="90" fill="url(#spot)" fill-opacity=".18"/>
            <circle cx="1238" cy="335" r="90" fill="url(#spot)" fill-opacity=".22"/>
            <circle cx="1218" cy="612" r="90" fill="url(#spot)" fill-opacity=".22"/>
            <circle cx="1318" cy="682" r="84" fill="url(#spot)" fill-opacity=".3"/>
            <circle cx="910" cy="60" r="90" fill="url(#spot)" fill-opacity=".07"/>
            <circle cx="1080" cy="600" r="150" fill="url(#spot)" fill-opacity=".08"/>
            <circle cx="200" cy="640" r="110" fill="url(#spot)" fill-opacity=".07"/>
          </g>
          <circle cx="720" cy="402" r="6.300" fill="none" stroke="#8d1a12" stroke-width="2"/>
        </g>
      </svg>
      <div class="maptype"><span class="mt-map">Map</span><span class="mt-sat">Satellite</span></div>
      <div class="ctl full"><svg viewBox="0 0 50 50"><path d="M12 20V12H19M32 12H38V20M38 31V38H32M19 38H12V31" fill="none" stroke="#666" stroke-width="4"/></svg></div>
      <div class="ctl pegman"><svg viewBox="0 0 56 56"><circle cx="28" cy="13" r="6" fill="#fbb827" stroke="#5e5e5e"/><path d="M22 20Q28 17 34 20L38 34L35 36L33 31V45H23V31L21 36L18 34Z" fill="#fbb827" stroke="#5e5e5e"/><path d="M24 20H32L28 26Z" fill="#e2761b"/><path d="M28 34V45" stroke="#5e5e5e"/></svg></div>
      <div class="ctl zoom"><svg viewBox="0 0 56 110"><path d="M18 27.500H39M28.500 17V38M18 83.500H39" stroke="#666" stroke-width="6"/><path d="M9 55H46" stroke="#e4e4e4" stroke-width="2"/></svg></div>
      <div class="glogo"><span class="g-b">G</span><span class="g-r">o</span><span class="g-y">o</span><span class="g-b">g</span><span class="g-g">l</span><span class="g-r">e</span></div>
      <div class="credits"><span>Map data ©2017 Google</span><span>Terms of Use</span><span>Report a map error</span></div>
    </div>
  </div>
</section>
</body>
</html>
```
FILE: styles.css
```css
* { box-sizing: border-box; }
body { margin: 0; width: 2880px; height: 1800px; overflow: hidden; background: #fff; font-family: Lato, sans-serif; }
svg { display: block; }

/* browser chrome */
.browser { height: 194px; background: #f2f2f2; border-bottom: 2px solid #d0d2d4; font-family: Inter, sans-serif; }
.tabstrip { height: 74px; background: #999; border-bottom: 1px solid #6b6b6b; display: flex; align-items: flex-start; }
.lights { display: flex; gap: 16px; padding: 26px 0 0 24px; width: 143px; }
.light { width: 24px; height: 24px; border-radius: 50%; border: 1px solid; }
.light-red { background: #ff5f57; border-color: #e2463f; }
.light-gray { background: #d2d2d2; border-color: #bdbdbd; }
.light-green { background: #28c93f; border-color: #17a62b; }
.tab { position: relative; width: 486px; height: 57px; margin-top: 17px; display: flex; align-items: flex-start; }
.tab-shape { position: absolute; inset: 0; width: 486px; height: 57px; }
.tab-file, .tab-title, .tab-close { position: relative; }
.tab-file { width: 21px; height: 28px; margin: 15px 17px 0 38px; }
.tab-title { font-size: 24px; line-height: 30px; margin: 14px -1px 0 1px; width: 360px; letter-spacing: -.25px; }
.tab-close { width: 14px; height: 14px; margin-top: 22px; }
.newtab { width: 66px; height: 34px; margin: 32px 0 0 -7px; }
.person { width: 32px; height: 32px; margin: 22px 18px 0 auto; }
.toolbar { height: 72px; display: flex; align-items: center; }
.navbtns { width: 241px; padding-left: 22px; display: flex; gap: 28px; }
.navbtns svg { width: 28px; height: 28px; }
.omnibox { width: 2342px; height: 54px; background: #fff; border: 1px solid #b5b5b5; border-radius: 6px; display: flex; align-items: center; padding: 0 13px; }
.info { width: 28px; height: 28px; margin-right: 11px; }
.url { font-size: 28px; color: #808080; letter-spacing: -.14px; flex: 1; }
.url b { font-weight: 400; color: #000; letter-spacing: -.7px; }
.star { width: 30px; height: 30px; }
.exts { display: flex; gap: 14px; padding-left: 21px; }
.exts svg { width: 42px; height: 42px; overflow: visible; }
.css-word { font: 700 12px "Open Sans", sans-serif; fill: #fff; }
.badge-num { font: 700 18px Inter, sans-serif; fill: #fff; }
.bb { font: 19px "Liberation Serif", serif; fill: #fff; }
.bookmarks { height: 38px; padding-left: 27px; display: grid; grid-template-columns: 123px 164px 128px 309px 308px 263px 156px 276px 220px 308px 228px 335px auto; align-items: center; }
.bm { display: flex; align-items: center; gap: 8px; font-size: 24px; color: #000; white-space: nowrap; letter-spacing: 0; }
.bm-tight { letter-spacing: -.42px; }
.bm-wide { letter-spacing: .22px; }

/* page */
.site-nav { height: 144px; background: #2d3e50; color: #fff; display: flex; justify-content: space-between; align-items: center; padding: 0 371px 4px 330px; font-family: Inter, sans-serif; font-weight: 700; }
.brand { font-size: 47px; transform: scaleX(1.092); transform-origin: left; }
.nav-link { font-size: 32px; letter-spacing: 2px; transform: scaleX(1.037); transform-origin: right; }
.hero { height: 156px; background: #18ba9b; }
.heading { margin: 0; padding-top: 172px; font: 700 94px/120px Inter, sans-serif; color: #2d3e50; text-align: center; transform: scaleX(1.065); }
.divider { display: flex; justify-content: center; gap: 15px; margin-top: 31px; height: 60px; }
.divider svg { width: 62px; height: 58px; }
.rule { width: 194px; height: 8px; margin-top: 29px; background: #2d3e50; }
.row { display: grid; grid-template-columns: 860px 1440px; column-gap: 278px; margin: 61px 0 0 300px; align-items: start; }
.panel { margin-top: 12px; height: 774px; background: #128d72; padding: 258px 256px 0; display: flex; flex-direction: column; align-items: flex-start; }
.label { color: #fff; font-size: 33px; font-weight: 700; line-height: 42px; letter-spacing: -.6px; }
.field { width: 348px; height: 60px; margin-top: 4px; border: 2px solid #d9d9d9; padding: 0 4px 3px; font: 33px Lato, sans-serif; color: #000; }
.submit { width: 152px; height: 58px; margin: 96px 0 0; padding: 0 0 3px; border: 2px solid #a9a9b4; outline: 3px solid #2a8cc0; background: linear-gradient(#e3e3e3, #f8f8f8); font: 33px Lato, sans-serif; letter-spacing: -.3px; color: #000; }

/* map */
.map { position: relative; width: 1440px; height: 802px; overflow: hidden; font-family: Roboto, sans-serif; }
.map-canvas { width: 1440px; height: 802px; }
.map-canvas path { vector-effect: non-scaling-stroke; }
.forest { fill: #d1e4cb; }
.clearing { fill: #f2f1ec; }
.park { fill: #cae6a2; }
.water { fill: #a3ccff; }
.tracks { fill: none; stroke: #fff; stroke-width: 2; }
.seam { stroke-width: 1; }
.roads { fill: none; stroke: #ecd08d; stroke-width: 2.2; stroke-linejoin: round; }
.streets { fill: none; stroke: #e3c06a; stroke-opacity: .8; stroke-width: 1.6; }
.a-case, .a-core, .u-case, .u-core, .m-case, .m-core { fill: none; stroke-linejoin: round; stroke-linecap: round; }
.a-case { stroke: #e5be62; stroke-width: 5; }
.a-core { stroke: #fbe8ab; stroke-width: 2.4; }
.u-case { stroke: #dfa63c; stroke-width: 6.5; }
.u-core { stroke: #eebb52; stroke-width: 4.5; }
.m-case { stroke: #e2931d; stroke-width: 5.5; }
.m-core { stroke: #f9d28f; stroke-width: 2; }
.dots { fill: #fff; stroke: #555; stroke-width: 1.7; }
.places { fill: #3a3528; stroke: #f7f6f2; stroke-opacity: .85; stroke-width: 5; paint-order: stroke; stroke-linejoin: round; font-family: Roboto, sans-serif; }
.range { fill: #3d8212; font-style: italic; }
.shields { fill: #6aa342; }
.shields text { fill: #fff; font: 500 18px Roboto, sans-serif; text-anchor: middle; }
.shields .m8 { fill: #ffe000; }
.maptype { position: absolute; left: 20px; top: 20px; width: 186px; height: 58px; background: #fff; border-radius: 4px; box-shadow: 0 2px 6px rgba(0,0,0,.3); display: flex; align-items: center; font-size: 22px; line-height: 56px; }
.mt-map { width: 74px; height: 58px; text-align: center; font-weight: 500; border-right: 1px solid #e6e6e6; }
.mt-sat { flex: 1; height: 58px; text-align: center; color: #565656; letter-spacing: .1px; }
.ctl { position: absolute; background: #fff; border-radius: 4px; box-shadow: 0 2px 6px rgba(0,0,0,.28); }
.full { left: 1362px; top: 20px; width: 50px; height: 50px; }
.pegman { left: 1364px; top: 568px; width: 56px; height: 56px; }
.zoom { left: 1364px; top: 644px; width: 56px; height: 110px; }
.glogo { position: absolute; left: 13px; top: 748px; font: 700 39px/50px Lato, sans-serif; letter-spacing: 0; text-shadow: 0 0 3px #fff, 0 0 3px #fff; }
.g-b { color: #4285f4; }
.g-r { color: #ea4335; }
.g-y { color: #fbbc05; }
.g-g { color: #34a853; }
.credits { position: absolute; right: 0; bottom: 0; width: 572px; height: 28px; background: rgba(245,245,245,.75); display: flex; justify-content: space-between; align-items: center; padding: 0 13px 2px 10px; font-size: 20px; color: #444; white-space: nowrap; }
```
